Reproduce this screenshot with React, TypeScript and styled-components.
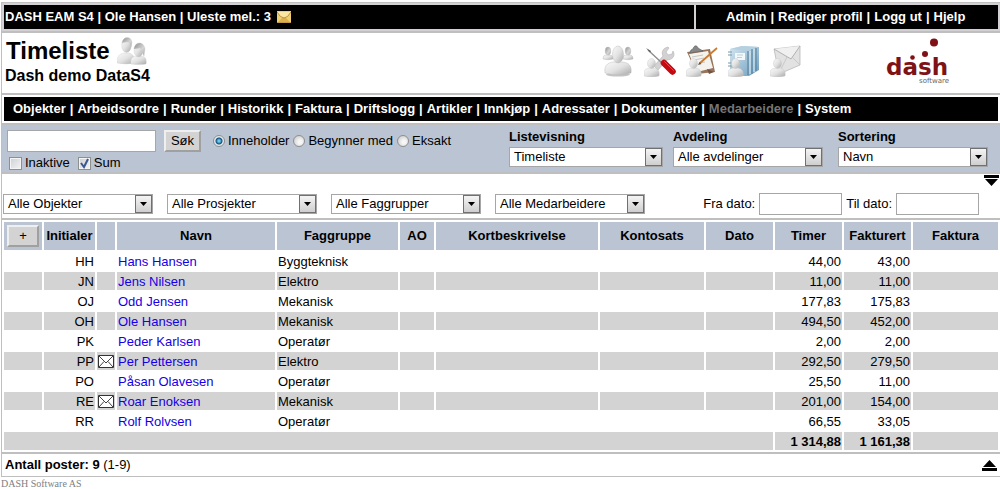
import React from "react";
import styled, { createGlobalStyle } from "styled-components";

const GREY = "#bfbfbf";
const BLUE = "#bac4d3";
const STRIPE = "#d3d3d3";

const GlobalStyle = createGlobalStyle`
  * { box-sizing: border-box; }
  body {
    margin: 0;
    background: #fff;
    color: #000;
    font-family: "Liberation Sans", Arial, sans-serif;
    font-size: 13px;
    line-height: 16px;
  }
`;

const Page = styled.div`
  padding: 2px 0 0 1px;
`;

const Frame = styled.div`
  border-left: 1px solid ${GREY};
`;

const StatusBar = styled.div`
  display: flex;
  gap: 2px;
  padding: 2px;
  background: #d3d0d3;
  border-top: 1px solid ${GREY};
  border-bottom: 2px solid ${GREY};
  color: #fff;
  font-weight: bold;
`;

const StatusInfo = styled.div`
  flex: 1;
  display: flex;
  align-items: center;
  gap: 6px;
  height: 24px;
  padding-left: 1px;
  background: #000;
`;

const StatusLinks = styled.nav`
  display: flex;
  align-items: center;
  gap: 4px;
  width: 302px;
  padding-left: 30px;
  background: #000;
`;

const BarLink = styled.a<{ $dim?: boolean }>`
  color: ${(p) => (p.$dim ? "#757575" : "#fff")};
  text-decoration: none;
`;

const Header = styled.header`
  display: flex;
  align-items: flex-start;
  height: 62px;
  border-bottom: 2px solid ${GREY};
`;

const Titles = styled.div`
  flex: 1;
  padding: 4px 0 0 3px;
`;

const Title = styled.h1`
  display: flex;
  gap: 7px;
  margin: 0;
  padding-left: 1px;
  font-size: 24px;
  line-height: 28px;
`;

const Subtitle = styled.h2`
  margin: 0;
  font-size: 16px;
  line-height: 22px;
`;

const Toolbar = styled.nav`
  display: flex;
  gap: 10px;
  padding: 12px 82px 0 0;
`;

const ToolLink = styled.a`
  display: block;
  width: 32px;
  height: 32px;
`;

const LogoBox = styled.div`
  width: 116px;
  padding-top: 4px;
`;

const NavWrap = styled.div`
  padding: 2px;
  border-bottom: 2px solid ${GREY};
`;

const MainNav = styled.nav`
  display: flex;
  align-items: center;
  gap: 4px;
  height: 24px;
  padding-left: 9px;
  background: #000;
  color: #fff;
  font-weight: bold;
  white-space: nowrap;
`;

const SearchPanel = styled.form`
  display: flex;
  height: 49px;
  padding: 4px 0 0 5px;
  background: ${BLUE};
  border-bottom: 2px solid ${GREY};
`;

const SearchSide = styled.div`
  width: 502px;
`;

const Line = styled.div`
  display: flex;
  align-items: center;
`;

const TextBox = styled.input<{ $w: number }>`
  width: ${(p) => p.$w}px;
  height: 22px;
  padding: 1px 3px;
  border: 1px solid #a6a6a6;
  background: #fff;
  font: inherit;
`;

const PushButton = styled.button<{ $w: number }>`
  width: ${(p) => p.$w}px;
  height: 22px;
  padding: 0;
  border: 2px solid;
  border-color: #efefef #a0a0a0 #a0a0a0 #efefef;
  background: ${STRIPE};
  color: #000;
  font: inherit;
  font-weight: normal;
  text-align: center;
`;

const Choice = styled.label`
  display: flex;
  align-items: center;
  gap: 3px;
  margin-right: 4px;
`;

const Radio = styled.input`
  appearance: none;
  width: 12px;
  height: 12px;
  margin: 0;
  border: 1px solid #8e8f8f;
  border-radius: 50%;
  background: radial-gradient(circle at 60% 60%, #f6f6f6 20%, #cfcfcf 80%);
  &:checked {
    background: radial-gradient(circle, #6cc8ee 0 1px, #10517d 3px, #e4e9ec 4px);
  }
`;

const Tick = styled.input`
  appearance: none;
  width: 13px;
  height: 13px;
  margin: 0;
  border: 1px solid #8e8f8f;
  outline: 1px solid #f4f4f4;
  outline-offset: -2px;
  background: linear-gradient(135deg, #cdd0d4, #f4f4f4);
`;

const TickBox = styled.span`
  display: grid;
  > * { grid-area: 1 / 1; }
  svg { pointer-events: none; }
`;

const Field = styled.label<{ $w: number }>`
  display: block;
  width: ${(p) => p.$w}px;
  font-weight: bold;
`;

const SelectBox = styled.span<{ $w: number }>`
  display: grid;
  width: ${(p) => p.$w}px;
  height: 20px;
  border: 1px solid #a6a6a6;
  background: #fff;
  > * { grid-area: 1 / 1; }
  ${Field} & { margin-top: 2px; }
`;

const Select = styled.select`
  appearance: none;
  width: 100%;
  padding: 0 20px 0 4px;
  border: 0;
  background: transparent;
  color: #000;
  font: normal 13px/18px "Liberation Sans", Arial, sans-serif;
`;

const Arrow = styled.span`
  justify-self: end;
  display: grid;
  place-items: center;
  width: 17px;
  border: 1px solid #707070;
  background: linear-gradient(#f4f4f4, #cfcfcf);
  pointer-events: none;
`;

const FilterPanel = styled.form`
  height: 46px;
  border-bottom: 2px solid ${GREY};
`;

const ExpandRow = styled.div`
  display: flex;
  justify-content: flex-end;
  height: 19px;
`;

const IconButton = styled.button`
  display: block;
  width: 16px;
  height: 13px;
  padding: 0;
  border: 0;
  background: none;
`;

const Filters = styled.div`
  display: flex;
  align-items: center;
  gap: 14px;
  padding: 0 21px 0 1px;
`;

const Dates = styled.div`
  display: flex;
  gap: 4px;
  margin-left: auto;
`;

const DateField = styled.label`
  display: flex;
  align-items: center;
  gap: 4px;
`;

const DataTable = styled.table`
  width: 100%;
  table-layout: fixed;
  border-collapse: separate;
  border-spacing: 2px;
  border-bottom: 2px solid ${GREY};
`;

const HeadCell = styled.th`
  height: 28px;
  padding: 0;
  background: ${BLUE};
  text-align: center;
  white-space: nowrap;
`;

const Cell = styled.td<{ $right?: boolean; $strong?: boolean }>`
  height: 18px;
  padding: 1px 1px 0;
  line-height: 17px;
  text-align: ${(p) => (p.$right ? "right" : "left")};
  font-weight: ${(p) => (p.$strong ? "bold" : "normal")};
  white-space: nowrap;
`;

const MailCell = styled(Cell)`
  padding: 0;
  > svg { display: block; margin: 0 auto; }
`;

const Row = styled.tr<{ $striped: boolean }>`
  > td { background: ${(p) => (p.$striped ? STRIPE : "#fff")}; }
`;

const NameLink = styled.a`
  color: #1400e6;
  text-decoration: none;
`;

const Summary = styled.div`
  display: flex;
  align-items: center;
  justify-content: space-between;
  height: 23px;
  padding: 0 2px 0 3px;
  border-bottom: 1px solid ${GREY};
`;

const Footer = styled.footer`
  padding-top: 1px;
  color: #808080;
  font-family: "Liberation Serif", "Times New Roman", serif;
  font-size: 10px;
  line-height: 12px;
`;

const SearchLine = styled(Line)`
  gap: 8px;
  height: 24px;
`;

const Radios = styled.div`
  display: flex;
  margin-left: 4px;
`;

const OptionLine = styled(Line)`
  gap: 4px;
  padding: 2px 0 0 2px;
`;

const Defs = () => (
  <svg width="0" height="0" style={{ display: "block" }} aria-hidden="true">
    <defs>
      <linearGradient id="body" x1="0" y1="0" x2="1" y2="1">
        <stop offset="0" stopColor="#fafafa" />
        <stop offset="0.5" stopColor="#e2e2e2" />
        <stop offset="1" stopColor="#a9a9a9" />
      </linearGradient>
      <linearGradient id="dark" x1="0" y1="0" x2="1" y2="1">
        <stop offset="0" stopColor="#8d8d8d" />
        <stop offset="0.6" stopColor="#d6d6d6" />
        <stop offset="1" stopColor="#a5a5a5" />
      </linearGradient>
      <linearGradient id="binder" x1="0" y1="0" x2="1" y2="1">
        <stop offset="0" stopColor="#d6e7f1" />
        <stop offset="1" stopColor="#6c9dbd" />
      </linearGradient>
    </defs>
  </svg>
);

const MiniPerson = () => (
  <g fill="url(#body)" stroke="#c4c4c4" strokeWidth="0.4">
    <path d="M0 31c-1-5 1-7 5-8h5c4 1 6 3 5 8q-7 2-15 0z" />
    <ellipse cx="7.5" cy="18.5" rx="4" ry="5" />
  </g>
);

const PairIcon = () => (
  <svg width="30" height="28" viewBox="0 0 30 28" aria-hidden="true">
    <g stroke="#c6c6c6" strokeWidth="0.3">
      <path d="M0 26C0 19 2 17 7 16h5c4 1 6 4 6 10q-9 2-18 0z" fill="url(#body)" />
      <ellipse cx="9.5" cy="8.5" rx="4.8" ry="7" fill="url(#body)" />
      <path d="M5 6c1-7 9-7 10-1l-1 5c-1-3-1-5-3-5s-4 0-6 1z" fill="url(#dark)" />
      <path d="M14 27c-1-6 2-8 6-8h4c4 0 6 3 5 8q-7 1-15 0z" fill="url(#body)" />
      <ellipse cx="21.5" cy="13.5" rx="4.5" ry="6.5" fill="url(#body)" />
      <path d="M17 12c1-8 10-8 11 0l-1 7c-2-3-1-7-4-8-2 0-4 1-6 1z" fill="url(#dark)" />
    </g>
  </svg>
);

const TeamIcon = () => (
  <svg width="32" height="32" viewBox="0 0 32 32" aria-hidden="true">
    <ellipse cx="16" cy="29.5" rx="12" ry="2" fill="#c4c4c4" />
    <g stroke="#b2b2b2" strokeWidth="0.4">
      <path d="M1 14c0-3 1-4 4-4h2c3 0 4 1 4 4q-5 1.5-10 0z" fill="url(#body)" />
      <ellipse cx="6" cy="6" rx="2.8" ry="4" fill="url(#dark)" />
      <path d="M21 14c0-3 1-4 4-4h2c3 0 4 1 4 4q-5 1.5-10 0z" fill="url(#body)" />
      <ellipse cx="26" cy="6" rx="2.8" ry="4" fill="url(#dark)" />
      <path d="M3 28c-1-7 2-10 8-11h10c6 1 9 4 8 11q-13 4-26 0z" fill="url(#body)" />
      <ellipse cx="16" cy="9.5" rx="5.5" ry="8.5" fill="url(#body)" />
    </g>
  </svg>
);

const ToolsIcon = () => (
  <svg width="32" height="32" viewBox="0 0 32 32" aria-hidden="true">
    <path d="m10 21 9-10c-2-4 0-8 5-9l1 1-3 4 2 3 4-1 1-3c3 5-1 9-6 9l-9 10z" fill="#d2d2d2" stroke="#a9a9a9" strokeWidth="0.5" />
    <path d="M4 5 18 18" stroke="#8b8b8b" strokeWidth="1.3" />
    <path d="m2 3 5 3-1 1.500z" fill="#5d5d5d" />
    <path d="m20 18 8.500 8.500" stroke="#c30a12" strokeWidth="6.5" strokeLinecap="round" />
    <path d="m20.500 16.500 9 9" stroke="#e8434a" strokeWidth="1" strokeLinecap="round" />
    <MiniPerson />
  </svg>
);

const ClipboardIcon = () => (
  <svg width="32" height="32" viewBox="0 0 32 32" aria-hidden="true">
    <path d="M1 7 24 4l5 23-18 2z" fill="#97745a" />
    <path d="M3 9 22 6l5 17-16 4z" fill="#f5f3ef" />
    <path d="m6 12 11-2M8 15l10-2M13 18l6-1" stroke="#c9c6c0" strokeWidth="1" />
    <path d="M4 8c0-3 2-4 3-4 1-4 4-4 5-1l5 3z" fill="#868686" stroke="#606060" strokeWidth="0.6" />
    <path d="M14 18 31 3" stroke="#cb7b2d" strokeWidth="1.8" />
    <path d="m12 20 1.500-3 2 2z" fill="#555" />
    <path d="m21 24 7 3-5 2z" fill="#715443" />
    <MiniPerson />
  </svg>
);

const BindersIcon = () => (
  <svg width="32" height="32" viewBox="0 0 32 32" aria-hidden="true">
    <path d="m2 4 12-3 17 1v23l-10 6H2z" fill="url(#binder)" />
    <path d="m2 4 12-3 17 1-11 4z" fill="#b5d0e0" />
    <path d="M20 6v24M24 4v25M28 3v23" stroke="#4f7c9a" strokeWidth="1" />
    <path d="M22 6v23M26 4v23" stroke="#e4f0f6" strokeWidth="1" />
    <path d="M7 8h10v7H7z" fill="#f3f8fb" />
    <path d="M9 10h6M9 12.500h5" stroke="#a7bfcc" strokeWidth="0.7" />
    <path d="M0 7h4M0 10h4M0 18h4M0 21h4" stroke="#7d95a5" strokeWidth="1" />
    <MiniPerson />
  </svg>
);

const LetterIcon = () => (
  <svg width="32" height="32" viewBox="0 0 32 32" aria-hidden="true">
    <path d="M4 4 30 1v19L9 29z" fill="#e2e2e2" stroke="#b0b0b0" strokeWidth="0.7" />
    <path d="m4 4 17 10L30 1" fill="#f0f0f0" stroke="#a3a3a3" strokeWidth="0.8" />
    <path d="m9 28 8-16M30 20l-8-8" stroke="#bdbdbd" strokeWidth="0.7" />
    <MiniPerson />
  </svg>
);

const DashLogo = () => (
  <svg width="70" height="48" viewBox="0 0 70 48" role="img" aria-label="dash software">
    <g fill="#7f1216">
      <circle cx="50" cy="5.5" r="4" />
      <circle cx="41" cy="17" r="3" />
      <circle cx="28.5" cy="20.5" r="2.3" />
      <text x="2" y="38" fontFamily="DejaVu Sans" fontWeight="bold" fontSize="23">dash</text>
    </g>
    <text x="35" y="46" fill="#6b6458" fontFamily="DejaVu Sans" fontSize="7">software</text>
  </svg>
);

const MailIcon = () => (
  <svg width="14" height="12" viewBox="0 0 14 12" aria-hidden="true">
    <path d="M0 0h14v12H0z" fill="#f0cf72" />
    <path d="m1 11 5-5h2l5 5z" fill="#dcb04c" />
    <path d="M0 1q7 12 14 0" fill="#fbe7a4" stroke="#b98f35" />
    <path d="M0 11.500h14" stroke="#c39a45" />
  </svg>
);

const RowMailIcon = () => (
  <svg width="16" height="13" viewBox="0 0 16 13" role="img" aria-label="E-post">
    <path d="M0.500 0.500h15v12h-15z" fill="#fff" stroke="#333" />
    <path d="m1 1 7 7 7-7M1 12l5-5.500M15 12l-5-5.500" fill="none" stroke="#444" />
  </svg>
);

const TickMark = () => (
  <svg width="13" height="13" viewBox="0 0 13 13" aria-hidden="true">
    <path d="m3 6 3 4 4-8" fill="none" stroke="#3d5590" strokeWidth="2" />
  </svg>
);

const DropDown = ({ text, w, label }: { text: string; w: number; label?: string }) => (
  <SelectBox $w={w}>
    <Select aria-label={label}>
      <option>{text}</option>
    </Select>
    <Arrow>
      <svg width="7" height="4" viewBox="0 0 7 4" aria-hidden="true">
        <path d="M0 0h7L3.500 4z" />
      </svg>
    </Arrow>
  </SelectBox>
);

const Links = ({ items, dim }: { items: string[]; dim?: string }) => (
  <>
    {items.map((item, i) => (
      <React.Fragment key={item}>
        {i > 0 && <span>|</span>}
        <BarLink href="#" $dim={item === dim}>{item}</BarLink>
      </React.Fragment>
    ))}
  </>
);

const NAV = ["Objekter", "Arbeidsordre", "Runder", "Historikk", "Faktura", "Driftslogg", "Artikler", "Innkjøp", "Adressater", "Dokumenter", "Medarbeidere", "System"];
const FILTERS = ["Alle Objekter", "Alle Prosjekter", "Alle Faggrupper", "Alle Medarbeidere"];
const HEADS = ["Initialer", "", "Navn", "Faggruppe", "AO", "Kortbeskrivelse", "Kontosats", "Dato", "Timer", "Fakturert", "Faktura"];
// Column widths in pixels; the description column takes the remaining space.
const COLS = [38, 51, 18, 158, 121, 34, undefined, 104, 67, 67, 67, 85];
const TOOLS = [
  { name: "Medarbeidere", Icon: TeamIcon },
  { name: "Verktøy", Icon: ToolsIcon },
  { name: "Arbeidsordre", Icon: ClipboardIcon },
  { name: "Arkiv", Icon: BindersIcon },
  { name: "Meldinger", Icon: LetterIcon },
];

const PEOPLE = [
  { id: "HH", name: "Hans Hansen", group: "Byggteknisk", hours: "44,00", billed: "43,00" },
  { id: "JN", name: "Jens Nilsen", group: "Elektro", hours: "11,00", billed: "11,00" },
  { id: "OJ", name: "Odd Jensen", group: "Mekanisk", hours: "177,83", billed: "175,83" },
  { id: "OH", name: "Ole Hansen", group: "Mekanisk", hours: "494,50", billed: "452,00" },
  { id: "PK", name: "Peder Karlsen", group: "Operatør", hours: "2,00", billed: "2,00" },
  { id: "PP", name: "Per Pettersen", group: "Elektro", hours: "292,50", billed: "279,50", mail: true },
  { id: "PO", name: "Påsan Olavesen", group: "Operatør", hours: "25,50", billed: "11,00" },
  { id: "RE", name: "Roar Enoksen", group: "Mekanisk", hours: "201,00", billed: "154,00", mail: true },
  { id: "RR", name: "Rolf Rolvsen", group: "Operatør", hours: "66,55", billed: "33,05" },
];

export default function App() {
  return (
    <Page>
      <GlobalStyle />
      <Defs />
      <Frame>
        <StatusBar>
          <StatusInfo>
            <span>DASH EAM S4 | Ole Hansen | Uleste mel.: 3</span>
            <MailIcon />
          </StatusInfo>
          <StatusLinks>
            <Links items={["Admin", "Rediger profil", "Logg ut", "Hjelp"]} />
          </StatusLinks>
        </StatusBar>

        <Header>
          <Titles>
            <Title>Timeliste <PairIcon /></Title>
            <Subtitle>Dash demo DataS4</Subtitle>
          </Titles>
          <Toolbar>
            {TOOLS.map(({ name, Icon }) => (
              <ToolLink key={name} href="#" aria-label={name}><Icon /></ToolLink>
            ))}
          </Toolbar>
          <LogoBox><DashLogo /></LogoBox>
        </Header>

        <NavWrap>
          <MainNav><Links items={NAV} dim="Medarbeidere" /></MainNav>
        </NavWrap>

        <SearchPanel>
          <SearchSide>
            <SearchLine>
              <TextBox $w={149} aria-label="Søk" />
              <PushButton $w={37} type="button">Søk</PushButton>
              <Radios>
                <Choice><Radio type="radio" name="match" defaultChecked />Inneholder</Choice>
                <Choice><Radio type="radio" name="match" />Begynner med</Choice>
                <Choice><Radio type="radio" name="match" />Eksakt</Choice>
              </Radios>
            </SearchLine>
            <OptionLine>
              <Choice><Tick type="checkbox" />Inaktive</Choice>
              <Choice>
                <TickBox><Tick type="checkbox" defaultChecked /><TickMark /></TickBox>Sum
              </Choice>
            </OptionLine>
          </SearchSide>
          <Field $w={164}>Listevisning<DropDown text="Timeliste" w={154} /></Field>
          <Field $w={165}>Avdeling<DropDown text="Alle avdelinger" w={150} /></Field>
          <Field $w={150}>Sortering<DropDown text="Navn" w={150} /></Field>
        </SearchPanel>

        <FilterPanel>
          <ExpandRow>
            <IconButton type="button" aria-label="Til bunnen">
              <svg width="16" height="13" viewBox="0 0 16 13" aria-hidden="true">
                <path d="M0 1h15v3H0zM1 5h13l-6.500 7z" />
              </svg>
            </IconButton>
          </ExpandRow>
          <Filters>
            {FILTERS.map((f) => <DropDown key={f} text={f} w={150} label={f} />)}
            <Dates>
              <DateField>Fra dato: <TextBox $w={83} /></DateField>
              <DateField>Til dato: <TextBox $w={83} /></DateField>
            </Dates>
          </Filters>
        </FilterPanel>

        <DataTable>
          <colgroup>
            {COLS.map((w, i) => <col key={i} width={w} />)}
          </colgroup>
          <thead>
            <tr>
              <HeadCell><PushButton $w={32} type="button">+</PushButton></HeadCell>
              {HEADS.map((h, i) => <HeadCell key={i}>{h}</HeadCell>)}
            </tr>
          </thead>
          <tbody>
            {PEOPLE.map((p, i) => (
              <Row key={p.id} $striped={i % 2 === 1}>
                <Cell />
                <Cell $right>{p.id}</Cell>
                <MailCell>{p.mail && <RowMailIcon />}</MailCell>
                <Cell><NameLink href="#">{p.name}</NameLink></Cell>
                <Cell>{p.group}</Cell>
                <Cell /><Cell /><Cell /><Cell />
                <Cell $right>{p.hours}</Cell>
                <Cell $right>{p.billed}</Cell>
                <Cell />
              </Row>
            ))}
            <Row $striped>
              <Cell colSpan={9} />
              <Cell $right $strong>1 314,88</Cell>
              <Cell $right $strong>1 161,38</Cell>
              <Cell />
            </Row>
          </tbody>
        </DataTable>

        <Summary>
          <span><b>Antall poster: 9</b> (1-9)</span>
          <IconButton type="button" aria-label="Til toppen">
            <svg width="16" height="13" viewBox="0 0 16 13" aria-hidden="true">
              <path d="M1 8h13L7.500 1zM0 9h15v3H0z" />
            </svg>
          </IconButton>
        </Summary>
      </Frame>
      <Footer>DASH Software AS</Footer>
    </Page>
  );
}
